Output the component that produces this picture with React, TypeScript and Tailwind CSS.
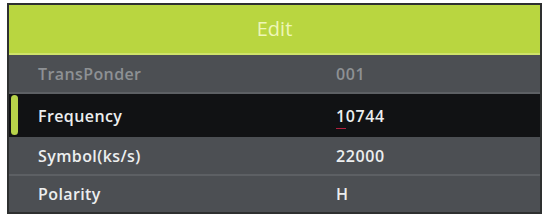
export default function App() {
  const rows = [
    { label: 'TransPonder', value: '001', dim: true },
    { label: 'Frequency', value: '10744', active: true },
    { label: 'Symbol(ks/s)', value: '22000' },
    { label: 'Polarity', value: 'H' },
  ]

  return (
    <div className="w-[546px] h-[217px] bg-white pt-[3px] pl-[7px]" style={{ fontFamily: '"Open Sans", "DejaVu Sans", sans-serif' }}>
      <div className="w-[535px] h-[211px] border-2 border-[#2e3030] bg-[#4c4f53] flex flex-col overflow-hidden">
        <div className="h-[50px] shrink-0 bg-[#b9d640] border-b-2 border-[#cfe36a] flex items-center justify-center">
          <span className="text-[20px] text-[#eef6b8] font-medium">Edit</span>
        </div>
        {rows.map((r, i) => (
          <div
            key={r.label}
            className={
              r.active
                ? 'relative h-[43px] shrink-0 bg-[#111214] flex items-center'
                : i === rows.length - 1
                ? 'relative flex-1 bg-[#4c4f53] flex items-center'
                : 'relative h-[39px] shrink-0 bg-[#4c4f53] border-b-2 border-[#5d6064] flex items-center'
            }
          >
            {r.active && <div className="absolute left-[2px] top-[1px] bottom-[2px] w-[7px] rounded-sm bg-[#b7d34a]" />}
            <span
              className={
                r.dim
                  ? 'w-[327px] pl-[29px] text-[16px] font-semibold tracking-[0.4px] text-[#8e9194]'
                  : 'w-[327px] pl-[29px] text-[16px] font-semibold tracking-[0.4px] text-[#eceeef]'
              }
            >
              {r.label}
            </span>
            <span
              className={
                r.dim
                  ? 'text-[16px] font-semibold tracking-[0.6px] text-[#8e9194]'
                  : 'text-[16px] font-semibold tracking-[0.6px] text-[#eceeef]'
              }
            >
              {r.active ? (
                <>
                  <span className="border-b border-[#b0203f] pb-[1px]">1</span>0744
                </>
              ) : (
                r.value
              )}
            </span>
          </div>
        ))}
      </div>
    </div>
  )
}
